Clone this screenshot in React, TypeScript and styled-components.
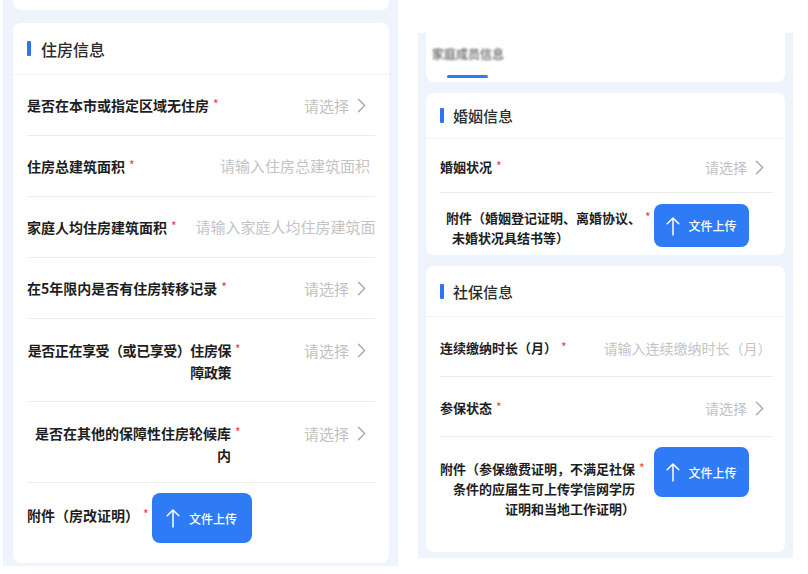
import React from "react";
import styled, { createGlobalStyle } from "styled-components";

const GlobalStyle = createGlobalStyle`
  html, body {
    margin: 0;
    padding: 0;
    background: #fff;
  }
  body {
    font-family: "Noto Sans CJK SC", "Noto Sans", sans-serif;
    color: #222;
  }
`;

type Size = "lg" | "sm";

interface Field {
   label: string[];
   kind: "select" | "input" | "upload";
   placeholder?: string;
   height: number;
   padTop: number;
   labelTop?: number;
   labelWidth?: number;
   align?: "left" | "right";
   indent?: number;
   tight?: boolean;
   btn?: { w: number; h: number; gap: number };
}

const housing: Field[] = [
   { label: ["是否在本市或指定区域无住房"], kind: "select", placeholder: "请选择", height: 61, padTop: 19 },
   { label: ["住房总建筑面积"], kind: "input", placeholder: "请输入住房总建筑面积", height: 61, padTop: 19 },
   { label: ["家庭人均住房建筑面积"], kind: "input", placeholder: "请输入家庭人均住房建筑面积", height: 61, padTop: 19 },
   { label: ["在5年限内是否有住房转移记录"], kind: "select", placeholder: "请选择", height: 61, padTop: 19 },
   {
      label: ["是否正在享受（或已享受）住房保", "障政策"],
      kind: "select",
      placeholder: "请选择",
      height: 83,
      padTop: 20,
      labelWidth: 204,
      tight: true,
   },
   { label: ["是否在其他的保障性住房轮候库", "内"], kind: "select", placeholder: "请选择", height: 81, padTop: 20, labelWidth: 204 },
   { label: ["附件（房改证明）"], kind: "upload", height: 80, padTop: 10, labelTop: 11, btn: { w: 100, h: 50, gap: 3 } },
];

const marriage: Field[] = [
   { label: ["婚姻状况"], kind: "select", placeholder: "请选择", height: 54, padTop: 18 },
   {
      label: ["附件（婚姻登记证明、离婚协议、", "未婚状况具结书等）"],
      kind: "upload",
      height: 62,
      padTop: 11,
      labelTop: 4,
      align: "left",
      indent: 6,
      btn: { w: 95, h: 43, gap: 3 },
   },
];

const social: Field[] = [
   { label: ["连续缴纳时长（月）"], kind: "input", placeholder: "请输入连续缴纳时长（月）", height: 60, padTop: 21 },
   { label: ["参保状态"], kind: "select", placeholder: "请选择", height: 60, padTop: 21 },
   {
      label: ["附件（参保缴费证明，不满足社保", "条件的应届生可上传学信网学历", "证明和当地工作证明）"],
      kind: "upload",
      height: 115,
      padTop: 10,
      labelTop: 12,
      btn: { w: 95, h: 50, gap: 9 },
   },
];

const Chevron = () => (
   <svg width="9" height="15" viewBox="0 0 9 15" fill="none">
      <path d="M1.5 1.2 7.6 7.5 1.5 13.8" stroke="#a9a9a9" strokeWidth="1.4" strokeLinecap="round" strokeLinejoin="round" />
   </svg>
);

const UpArrow = () => (
   <svg width="14" height="20" viewBox="0 0 14 20" fill="none">
      <path d="M7 19V2M1.2 7.8 7 2l5.8 5.8" stroke="#fff" strokeWidth="1.5" strokeLinecap="round" strokeLinejoin="round" />
   </svg>
);

const FormCard = ({ title, fields, size, headerH }: { title: string; fields: Field[]; size: Size; headerH: number }) => (
   <Card>
      <Header $h={headerH} $size={size}>
         <Bar />
         <span>{title}</span>
      </Header>
      {fields.map((f, i) => (
         <Row key={i} $size={size} $h={f.height} $pt={f.padTop} $last={i === fields.length - 1}>
            <LabelGroup $top={f.labelTop ?? 0}>
               <Label
                  $size={size}
                  $w={f.labelWidth}
                  $align={f.align ?? "right"}
                  $indent={f.indent ?? 0}
                  $tight={!!f.tight}
               >
                  {f.label.map((line, j) => (
                     <span key={j}>{line}</span>
                  ))}
               </Label>
               <Star $size={size}>*</Star>
            </LabelGroup>
            {f.kind === "select" && (
               <Select $size={size}>
                  <span>{f.placeholder}</span>
                  <Chevron />
               </Select>
            )}
            {f.kind === "input" && <InputHint $size={size}>{f.placeholder}</InputHint>}
            {f.kind === "upload" && f.btn && (
               <UploadButton $w={f.btn.w} $h={f.btn.h} $gap={f.btn.gap}>
                  <UpArrow />
                  <span>文件上传</span>
               </UploadButton>
            )}
         </Row>
      ))}
   </Card>
);

const App = () => {
   return (
      <>
         <GlobalStyle />
         <Page>
            <LeftPanel>
               <TopStub />
               <FormCard title="住房信息" fields={housing} size="lg" headerH={52} />
            </LeftPanel>
            <RightPanel>
               <TabCard>
                  <TabText>家庭成员信息</TabText>
                  <TabLine />
               </TabCard>
               <FormCard title="婚姻信息" fields={marriage} size="sm" headerH={46} />
               <Spacer />
               <FormCard title="社保信息" fields={social} size="sm" headerH={51} />
            </RightPanel>
         </Page>
      </>
   );
};

const Page = styled.div`
   width: 808px;
   height: 574px;
   display: flex;
   align-items: flex-start;
   overflow: hidden;
   background: #fff;
`;

const LeftPanel = styled.div`
   margin-left: 3px;
   width: 395px;
   height: 566px;
   box-sizing: border-box;
   padding: 0 9px 0 10px;
   background: #eef3fc;
   display: flex;
   flex-direction: column;
   gap: 13px;
`;

const TopStub = styled.div`
   height: 10px;
   background: #fff;
   border-radius: 0 0 8px 8px;
`;

const RightPanel = styled.div`
   margin: 33px 0 0 20px;
   width: 375px;
   height: 525px;
   box-sizing: border-box;
   padding: 0 8px;
   background: #eef3fc;
   display: flex;
   flex-direction: column;
   gap: 11px;
`;

const Spacer = styled.div`
   height: 1px;
   margin: -6px 0;
`;

const TabCard = styled.div`
   height: 49px;
   background: #fff;
   border-radius: 0 0 8px 8px;
   position: relative;
   padding: 12px 0 0 6px;
   box-sizing: border-box;
`;

const TabText = styled.div`
   font-size: 12px;
   line-height: 18px;
   font-weight: 500;
   color: #5c5c5c;
   filter: blur(1.3px);
`;

const TabLine = styled.div`
   position: absolute;
   left: 21px;
   bottom: 4px;
   width: 41px;
   height: 3px;
   border-radius: 2px;
   background: #2f7bf6;
`;

const Card = styled.div`
   background: #fff;
   border-radius: 8px;
   overflow: hidden;
`;

const Header = styled.div<{ $h: number; $size: Size }>`
   height: ${(p) => p.$h}px;
   box-sizing: border-box;
   display: flex;
   align-items: center;
   gap: ${(p) => (p.$size === "lg" ? 10 : 9)}px;
   padding-left: 14px;
   border-bottom: 1px solid #f2f3f6;
   font-size: ${(p) => (p.$size === "lg" ? 16 : 15)}px;
   font-weight: 500;
   color: #2b2b2b;
`;

const Bar = styled.i`
   width: 4px;
   height: 15px;
   border-radius: 1px;
   background: #2f74f5;
`;

const Row = styled.div<{ $size: Size; $h: number; $pt: number; $last: boolean }>`
   height: ${(p) => p.$h}px;
   box-sizing: border-box;
   margin: ${(p) => (p.$size === "lg" ? "0 14px" : "0 12px 0 14px")};
   padding-top: ${(p) => p.$pt}px;
   display: flex;
   align-items: flex-start;
   border-bottom: ${(p) => (p.$last ? "none" : "1px solid #ececec")};
`;

const LabelGroup = styled.div<{ $top: number }>`
   display: flex;
   align-items: flex-start;
   flex-shrink: 0;
   margin-top: ${(p) => p.$top}px;
`;

const Label = styled.div<{ $size: Size; $w?: number; $align: string; $indent: number; $tight: boolean }>`
   ${(p) => (p.$w ? `width: ${p.$w}px;` : "")}
   font-size: ${(p) => (p.$size === "lg" ? 14 : 13)}px;
   line-height: ${(p) => (p.$size === "lg" ? 22 : 20)}px;
   font-weight: 600;
   color: #1e1e1e;
   text-align: ${(p) => p.$align};
   margin-left: ${(p) => (p.$align === "left" ? 6 : 0)}px;
   letter-spacing: ${(p) => (p.$tight ? "-0.45px" : "0")};
   span {
      display: block;
      white-space: nowrap;
   }
   span + span {
      padding-left: ${(p) => p.$indent}px;
   }
`;

const Star = styled.span<{ $size: Size }>`
   color: #ee3b3b;
   font-size: 12px;
   line-height: ${(p) => (p.$size === "lg" ? 20 : 18)}px;
   margin-left: 4px;
`;

const Select = styled.div<{ $size: Size }>`
   flex: 1;
   display: flex;
   justify-content: flex-end;
   align-items: center;
   gap: 8px;
   padding-right: 9px;
   height: ${(p) => (p.$size === "lg" ? 22 : 20)}px;
   font-size: ${(p) => (p.$size === "lg" ? 15 : 14)}px;
   color: #c1c1c1;
   white-space: nowrap;
`;

const InputHint = styled.div<{ $size: Size }>`
   flex: 1;
   min-width: 0;
   margin-left: ${(p) => (p.$size === "lg" ? 19 : 37)}px;
   padding-right: ${(p) => (p.$size === "lg" ? 5 : 8)}px;
   text-align: right;
   white-space: nowrap;
   overflow: hidden;
   font-size: ${(p) => (p.$size === "lg" ? 15 : 14)}px;
   line-height: ${(p) => (p.$size === "lg" ? 22 : 20)}px;
   color: #c4c4c4;
`;

const UploadButton = styled.button<{ $w: number; $h: number; $gap: number }>`
   width: ${(p) => p.$w}px;
   height: ${(p) => p.$h}px;
   margin-left: ${(p) => p.$gap}px;
   flex-shrink: 0;
   padding: 0;
   border: none;
   border-radius: 8px;
   background: #2f7bf6;
   color: #fff;
   display: flex;
   align-items: center;
   justify-content: center;
   gap: 9px;
   font-family: inherit;
   font-size: 12px;
   font-weight: 500;
`;

export default App;
